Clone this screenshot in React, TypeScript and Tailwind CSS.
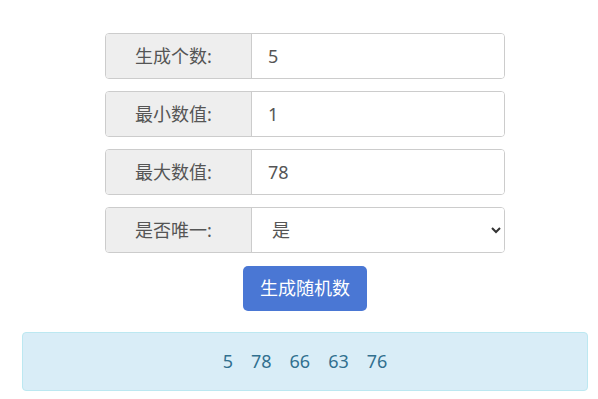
import React from "react";

const font = { fontFamily: '"Noto Sans", "Noto Sans CJK SC", sans-serif' };

function Row({ label, children }: { label: string; children: React.ReactNode }) {
  return (
    <div className="flex h-[46px] w-[400px] rounded-[4px] border border-[#ccc] overflow-hidden">
      <div className="flex w-[146px] shrink-0 items-center justify-center border-r border-[#ccc] bg-[#eee] pr-[10px] text-[18px] text-[#555]">
        {label}
      </div>
      <div className="flex flex-1 items-center bg-white px-[16px] text-[18px] text-[#555]">{children}</div>
    </div>
  );
}

export default function App() {
  return (
    <div className="flex w-[598px] flex-col items-center bg-white pl-[12px] pt-[33px]" style={font}>
      <div className="flex flex-col gap-[12px]">
        <Row label="生成个数:">5</Row>
        <Row label="最小数值:">1</Row>
        <Row label="最大数值:">78</Row>
        <Row label="是否唯一:">
          <div className="flex w-full items-center justify-between pl-[4px]">
            <span>是</span>
            <svg width="12" height="8" viewBox="0 0 12 8" className="mr-[-14px]">
              <path d="M2 2 L6 6 L10 2" fill="none" stroke="#333" strokeWidth="2" />
            </svg>
          </div>
        </Row>
      </div>
      <button className="mt-[13px] flex h-[45px] w-[124px] items-center justify-center rounded-[5px] bg-[#4a77d4] text-[18px] text-white">
        生成随机数
      </button>
      <div className="mt-[21px] flex h-[59px] w-[566px] items-center justify-center gap-[18px] rounded-[4px] border border-[#bce8f1] bg-[#d9edf7] text-[18px] text-[#31708f]">
        <span>5</span>
        <span>78</span>
        <span>66</span>
        <span>63</span>
        <span>76</span>
      </div>
    </div>
  );
}
